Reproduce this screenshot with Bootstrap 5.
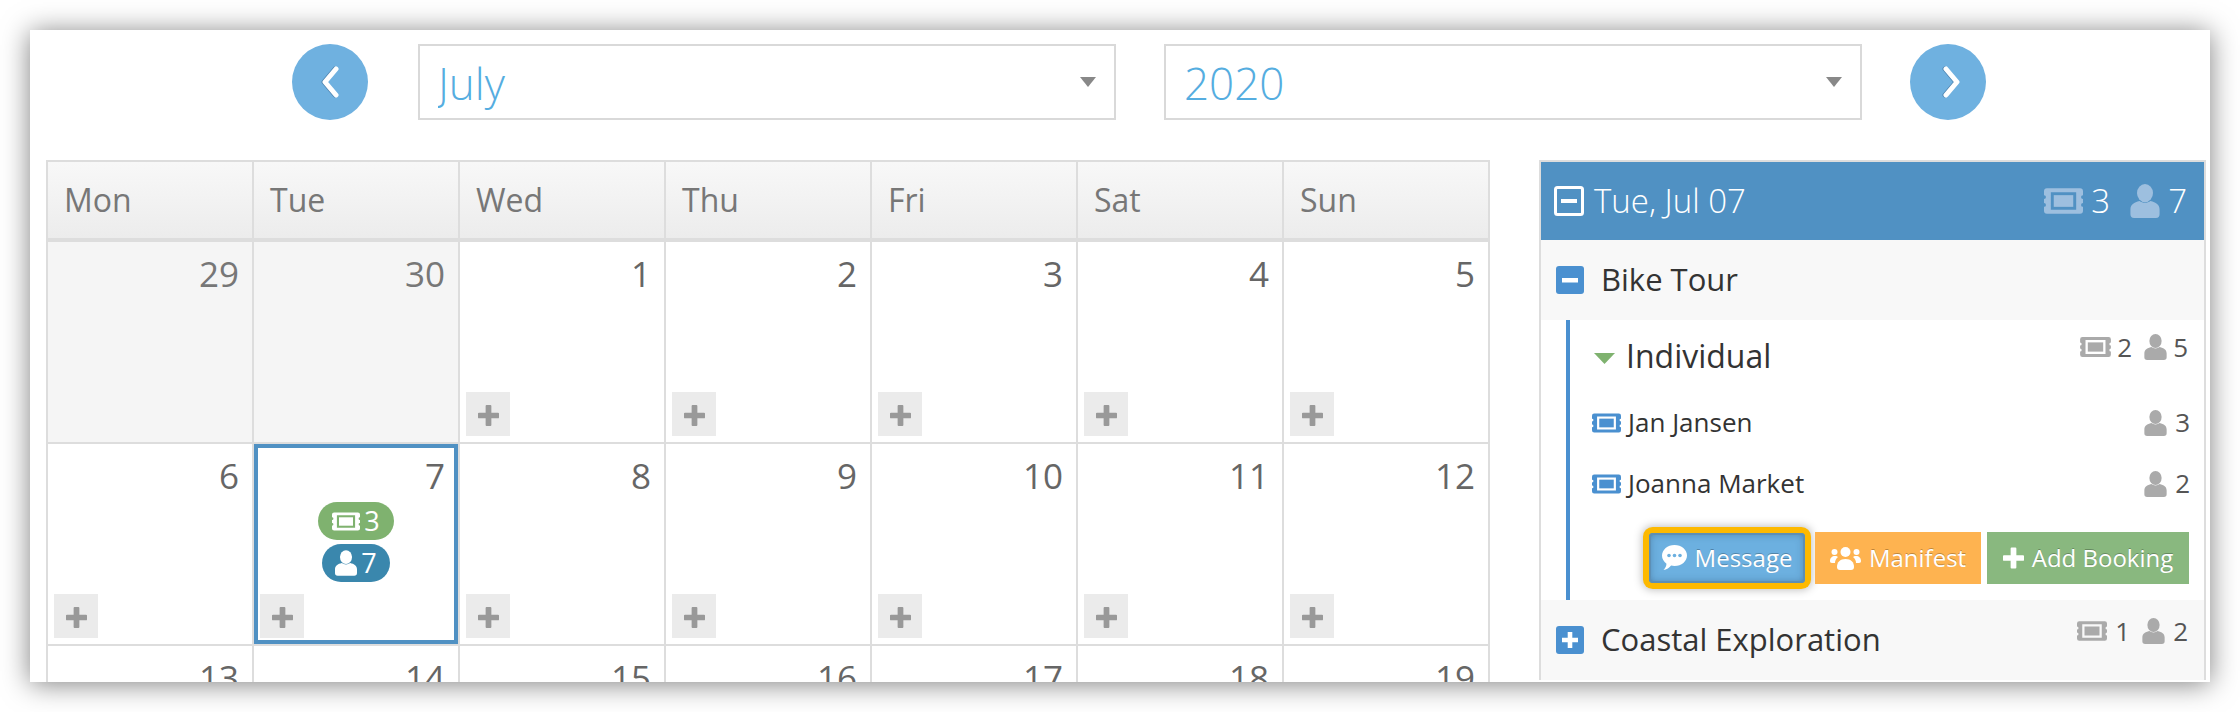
<!DOCTYPE html>
<html lang="en">
<head>
  <meta charset="UTF-8" />
  <title>Booking Calendar</title>
  <meta name="viewport" content="width=device-width, initial-scale=1" />
  <link href="https://cdn.jsdelivr.net/npm/bootstrap@5.3.3/dist/css/bootstrap.min.css" rel="stylesheet" />
  <style>
    html, body { height: 712px; overflow: hidden; }
    body { background: #fff; padding: 30px; font-family: "Open Sans", "Liberation Sans", sans-serif; }
    .app-window { width: 2180px; height: 652px; background: #fff; overflow: hidden; box-shadow: 0 2px 26px rgba(0,0,0,.5); }

    /* month / year bar */
    .month-bar { padding: 14px 0 0 262px; gap: 48px; margin-bottom: 40px; }
    .nav-circle { width: 76px; height: 76px; padding: 0; border: 0; border-radius: 50%; background: #6fb1e0; }
    .nav-circle svg { filter: drop-shadow(-1px 0 0 rgba(40,80,120,.45)); }
    .nav-prev { margin-right: 2px; }
    .month-bar .form-select { width: 698px; height: 76px; border: 2px solid #d9d9d9; border-radius: 0; color: #55ade0; font-size: 44px; font-weight: 300; padding: 2px 40px 0 18px; line-height: 70px; background-size: 16px 10px; background-position: right 18px center; background-image: url("data:image/svg+xml,%3csvg xmlns='http://www.w3.org/2000/svg' viewBox='0 0 16 10'%3e%3cpath fill='%23888' d='M0 0h16L8 10z'/%3e%3c/svg%3e"); }

    /* calendar */
    .cal-wrap { padding-left: 16px; }
    .cal-grid { display: grid; grid-template-columns: repeat(7, 206px); width: 1444px; border-left: 2px solid #ddd; border-top: 2px solid #ddd; }
    .cal-head { height: 80px; padding: 0 16px; border-right: 2px solid #ddd; border-bottom: 4px solid #ddd; background: linear-gradient(#f8f8f8, #ececec); color: #777; font-size: 32px; line-height: 75px; }
    .cal-cell { height: 202px; border-right: 2px solid #ddd; border-bottom: 2px solid #ddd; padding: 11px 6px 6px 6px; color: #666; }
    .cal-cell.is-off { background: #f5f5f5; color: #777; }
    .cal-cell.is-on { box-shadow: inset 0 0 0 4px #5091c3; }
    .day-num { font-size: 35px; line-height: 42px; padding-right: 7px; text-align: right; }
    .add-day { width: 44px; height: 44px; padding: 0; border: 0; border-radius: 0; background: #ebebeb; color: #999; }
    .add-day:hover { background: #e2e2e2; color: #999; }
    .day-pill { height: 38px; border-radius: 19px; color: #fff; font-size: 27px; }
    .pill-tickets { width: 76px; background: #7fb26f; margin-top: 5px; }
    .pill-people { width: 68px; background: #3a87ad; margin-top: 4px; }

    /* day panel */
    .day-panel { width: 667px; margin-left: 49px; border: 2px solid #ddd; height: 520px; }
    .panel-top { height: 78px; padding: 0 17px 0 13px; background: #5091c3; color: #fff; font-size: 33px; font-weight: 300; }
    .panel-top .dim { color: #9dbfdf; }
    .head-toggle { margin-right: 10px; }
    .head-gap { margin-left: 20px; }
    .tour-row { height: 80px; padding: 0 16px 0 15px; background: #f8f8f8; color: #333; font-size: 31px; }
    .tour-name { margin-left: 17px; margin-top: -1px; }
    .tour-open { height: 280px; margin-left: 25px; border-left: 4px solid #4a90d0; padding: 0 14px 0 22px; color: #333; }
    .group-row { height: 72px; font-size: 32px; }
    .group-tri { width: 21px; height: 11px; margin: 4px 11px 0 2px; }
    .name-row { height: 61px; font-size: 26px; }
    .name-row svg.i-tkt { color: #4a90d0; margin-right: 7px; }
    .count-set { font-size: 26px; color: #555; }
    .count-set svg { color: #aaa; }
    .count-lift { margin-top: -18px; }
    .count-gap { margin-left: 12px; }
    .icon-gap { margin-right: 6px; }
    .tight-end { margin-right: 2px; }
    .act-bar { margin-top: 18px; }
    .act-btn { height: 52px; padding: 0; border: 0; border-radius: 0; color: #fff; font-size: 24px; text-shadow: 0 -1px 0 rgba(0,0,0,.25); }
    .act-btn:hover { color: #fff; }
    .act-msg { width: 156px; height: 50px; margin: 1px 10px 0 0; border-radius: 4px; background: #6cb0e0; box-shadow: inset 0 0 0 2px #5d8fb5, inset 0 0 8px rgba(40,70,100,.5), 0 0 0 6px #fdb900, 0 0 8px 7px rgba(0,0,0,.25); }
    .act-msg:hover { background: #6cb0e0; }
    .act-man { width: 166px; margin-right: 6px; background: #feb350; }
    .act-man:hover { background: #feb350; }
    .act-add { width: 202px; margin-right: 1px; background: #89b87f; }
    .act-add:hover { background: #89b87f; }
    .act-add svg { color: #fff; }
  </style>
</head>
<body>
  <!-- shared icons -->
  <svg width="0" height="0" class="position-absolute">
    <symbol id="i-ticket" viewBox="0 0 40 26">
      <path fill-rule="evenodd" fill="currentColor" d="M3 0h34a3 3 0 0 1 3 3v4a2 2 0 0 0-2 2 2 2 0 0 0 2 2v4a2 2 0 0 0-2 2 2 2 0 0 0 2 2v4a3 3 0 0 1-3 3H3a3 3 0 0 1-3-3v-4a2 2 0 0 0 2-2 2 2 0 0 0-2-2v-4a2 2 0 0 0 2-2 2 2 0 0 0-2-2V3a3 3 0 0 1 3-3zM7 4v18h26V4z"/>
      <rect x="10" y="7" width="20" height="12" fill="currentColor"/>
    </symbol>
    <symbol id="i-person" viewBox="0 0 24 28">
      <ellipse cx="12" cy="7.5" rx="6.6" ry="7.5" fill="currentColor"/>
      <path fill="currentColor" d="M0 25v-4c0-4 3-6 7.500-7 2.500 2 6.500 2 9 0 4.500 1 7.500 3 7.500 7v4c0 2-1 3-3 3H3c-2 0-3-1-3-3z"/>
    </symbol>
    <symbol id="i-plus" viewBox="0 0 22 22">
      <path fill="currentColor" d="M8 1a1 1 0 0 1 1-1h4a1 1 0 0 1 1 1v7h7a1 1 0 0 1 1 1v4a1 1 0 0 1-1 1h-7v7a1 1 0 0 1-1 1H9a1 1 0 0 1-1-1v-7H1a1 1 0 0 1-1-1V9a1 1 0 0 1 1-1h7z"/>
    </symbol>
  </svg>

  <div class="app-window">
    <div class="month-bar d-flex align-items-center">
      <button class="btn nav-circle nav-prev d-flex align-items-center justify-content-center" type="button" aria-label="Previous month">
        <svg width="20" height="32" viewBox="0 0 20 32"><path d="M16 3 5 16l11 13" fill="none" stroke="#fff" stroke-width="5" stroke-linecap="round" stroke-linejoin="round"/></svg>
      </button>
      <select class="form-select" aria-label="Month"><option>July</option></select>
      <select class="form-select" aria-label="Year"><option>2020</option></select>
      <button class="btn nav-circle d-flex align-items-center justify-content-center" type="button" aria-label="Next month">
        <svg width="26" height="32" viewBox="0 0 26 32"><path d="M11 3l11 13-11 13" fill="none" stroke="#fff" stroke-width="5" stroke-linecap="round" stroke-linejoin="round"/></svg>
      </button>
    </div>

    <div class="cal-wrap d-flex align-items-start">
      <div class="cal-grid flex-shrink-0">
        <div class="cal-head">Mon</div><div class="cal-head">Tue</div><div class="cal-head">Wed</div><div class="cal-head">Thu</div><div class="cal-head">Fri</div><div class="cal-head">Sat</div><div class="cal-head">Sun</div>

        <div class="cal-cell is-off"><div class="day-num">29</div></div>
        <div class="cal-cell is-off"><div class="day-num">30</div></div>
        <div class="cal-cell d-flex flex-column"><div class="day-num">1</div><button class="btn add-day mt-auto" type="button" aria-label="Add"><svg width="21" height="21"><use href="#i-plus"/></svg></button></div>
        <div class="cal-cell d-flex flex-column"><div class="day-num">2</div><button class="btn add-day mt-auto" type="button" aria-label="Add"><svg width="21" height="21"><use href="#i-plus"/></svg></button></div>
        <div class="cal-cell d-flex flex-column"><div class="day-num">3</div><button class="btn add-day mt-auto" type="button" aria-label="Add"><svg width="21" height="21"><use href="#i-plus"/></svg></button></div>
        <div class="cal-cell d-flex flex-column"><div class="day-num">4</div><button class="btn add-day mt-auto" type="button" aria-label="Add"><svg width="21" height="21"><use href="#i-plus"/></svg></button></div>
        <div class="cal-cell d-flex flex-column"><div class="day-num">5</div><button class="btn add-day mt-auto" type="button" aria-label="Add"><svg width="21" height="21"><use href="#i-plus"/></svg></button></div>

        <div class="cal-cell d-flex flex-column"><div class="day-num">6</div><button class="btn add-day mt-auto" type="button" aria-label="Add"><svg width="21" height="21"><use href="#i-plus"/></svg></button></div>
        <div class="cal-cell is-on d-flex flex-column">
          <div class="day-num">7</div>
          <div class="day-pill pill-tickets align-self-center d-flex align-items-center justify-content-center gap-1"><svg width="28" height="19"><use href="#i-ticket"/></svg>3</div>
          <div class="day-pill pill-people align-self-center d-flex align-items-center justify-content-center gap-1"><svg width="22" height="26"><use href="#i-person"/></svg>7</div>
          <button class="btn add-day mt-auto" type="button" aria-label="Add"><svg width="21" height="21"><use href="#i-plus"/></svg></button>
        </div>
        <div class="cal-cell d-flex flex-column"><div class="day-num">8</div><button class="btn add-day mt-auto" type="button" aria-label="Add"><svg width="21" height="21"><use href="#i-plus"/></svg></button></div>
        <div class="cal-cell d-flex flex-column"><div class="day-num">9</div><button class="btn add-day mt-auto" type="button" aria-label="Add"><svg width="21" height="21"><use href="#i-plus"/></svg></button></div>
        <div class="cal-cell d-flex flex-column"><div class="day-num">10</div><button class="btn add-day mt-auto" type="button" aria-label="Add"><svg width="21" height="21"><use href="#i-plus"/></svg></button></div>
        <div class="cal-cell d-flex flex-column"><div class="day-num">11</div><button class="btn add-day mt-auto" type="button" aria-label="Add"><svg width="21" height="21"><use href="#i-plus"/></svg></button></div>
        <div class="cal-cell d-flex flex-column"><div class="day-num">12</div><button class="btn add-day mt-auto" type="button" aria-label="Add"><svg width="21" height="21"><use href="#i-plus"/></svg></button></div>

        <div class="cal-cell"><div class="day-num">13</div></div>
        <div class="cal-cell"><div class="day-num">14</div></div>
        <div class="cal-cell"><div class="day-num">15</div></div>
        <div class="cal-cell"><div class="day-num">16</div></div>
        <div class="cal-cell"><div class="day-num">17</div></div>
        <div class="cal-cell"><div class="day-num">18</div></div>
        <div class="cal-cell"><div class="day-num">19</div></div>
      </div>

      <div class="day-panel flex-shrink-0">
        <div class="panel-top d-flex align-items-center">
          <svg width="30" height="30" viewBox="0 0 30 30" class="head-toggle"><rect x="1.500" y="1.500" width="27" height="27" rx="2" fill="none" stroke="#fff" stroke-width="3"/><rect x="7" y="13" width="16" height="4" fill="#fff"/></svg>
          <span>Tue, Jul 07</span>
          <span class="ms-auto d-flex align-items-center">
            <svg width="39" height="26" class="dim me-2"><use href="#i-ticket"/></svg>3
            <svg width="30" height="34" class="dim head-gap me-2"><use href="#i-person"/></svg>7
          </span>
        </div>

        <div class="tour-row d-flex align-items-center">
          <svg width="28" height="28" viewBox="0 0 28 28"><rect width="28" height="28" rx="3" fill="#4a90d0"/><rect x="6" y="12" width="16" height="4.500" fill="#fff"/></svg>
          <span class="tour-name">Bike Tour</span>
        </div>

        <div class="tour-open">
          <div class="group-row d-flex align-items-center">
            <svg class="group-tri" viewBox="0 0 21 11"><path d="M0 0h21L10.500 11z" fill="#7fb26f"/></svg>
            <span>Individual</span>
            <span class="count-set count-lift tight-end ms-auto d-flex align-items-center">
              <svg width="31" height="20" class="icon-gap"><use href="#i-ticket"/></svg>2
              <svg width="23" height="26" class="count-gap icon-gap"><use href="#i-person"/></svg>5
            </span>
          </div>
          <div class="name-row d-flex align-items-center">
            <svg width="29" height="20" class="i-tkt"><use href="#i-ticket"/></svg>
            <span>Jan Jansen</span>
            <span class="count-set ms-auto d-flex align-items-center"><svg width="23" height="26" class="me-2"><use href="#i-person"/></svg>3</span>
          </div>
          <div class="name-row d-flex align-items-center">
            <svg width="29" height="20" class="i-tkt"><use href="#i-ticket"/></svg>
            <span>Joanna Market</span>
            <span class="count-set ms-auto d-flex align-items-center"><svg width="23" height="26" class="me-2"><use href="#i-person"/></svg>2</span>
          </div>
          <div class="act-bar d-flex justify-content-end align-items-start">
            <button class="btn act-btn act-msg d-flex align-items-center justify-content-center gap-2" type="button">
              <svg width="25" height="26" viewBox="0 0 25 26"><path fill="#fff" d="M12.500 0C19.500 0 25 4.700 25 10.500S19.500 21 12.500 21c-1.200 0-2.300-.1-3.400-.4C7.500 22.800 4.500 25 1.500 25c1.500-1.500 2.800-3.600 3-6.300C1.800 16.800 0 13.800 0 10.500 0 4.700 5.500 0 12.500 0z"/><circle cx="7" cy="10.500" r="1.800" fill="#6cb0e0"/><circle cx="12.500" cy="10.500" r="1.800" fill="#6cb0e0"/><circle cx="18" cy="10.500" r="1.800" fill="#6cb0e0"/></svg>
              Message
            </button>
            <button class="btn act-btn act-man d-flex align-items-center justify-content-center gap-2" type="button">
              <svg width="31" height="23" viewBox="0 0 31 23"><g fill="#fff"><circle cx="15.500" cy="5" r="5"/><circle cx="4.500" cy="5" r="3"/><circle cx="26.500" cy="5" r="3"/><path d="M7 20c0-5 3-8 8.500-8S24 15 24 20c0 2-1 3-3 3H10c-2 0-3-1-3-3z"/><path d="M0 14c0-3 2-5 5-5 1.500 0 2.500.5 3 1-2 1.500-3 3.500-3 6H2c-1.500 0-2-1-2-2zM31 14c0-3-2-5-5-5-1.500 0-2.500.5-3 1 2 1.500 3 3.500 3 6h3c1.500 0 2-1 2-2z"/></g></svg>
              Manifest
            </button>
            <button class="btn act-btn act-add d-flex align-items-center justify-content-center gap-2" type="button">
              <svg width="21" height="22"><use href="#i-plus"/></svg>
              Add Booking
            </button>
          </div>
        </div>

        <div class="tour-row d-flex align-items-center">
          <svg width="28" height="28" viewBox="0 0 28 28"><rect width="28" height="28" rx="3" fill="#4a90d0"/><path fill="#fff" d="M11.700 6h4.600v5.700H22v4.600h-5.700V22h-4.600v-5.700H6v-4.600h5.700z"/></svg>
          <span class="tour-name">Coastal Exploration</span>
          <span class="count-set count-lift ms-auto d-flex align-items-center">
            <svg width="30" height="20" class="me-2"><use href="#i-ticket"/></svg>1
            <svg width="23" height="26" class="count-gap me-2"><use href="#i-person"/></svg>2
          </span>
        </div>
      </div>
    </div>
  </div>

  <script src="https://cdn.jsdelivr.net/npm/bootstrap@5.3.3/dist/js/bootstrap.bundle.min.js"></script>
</body>
</html>
